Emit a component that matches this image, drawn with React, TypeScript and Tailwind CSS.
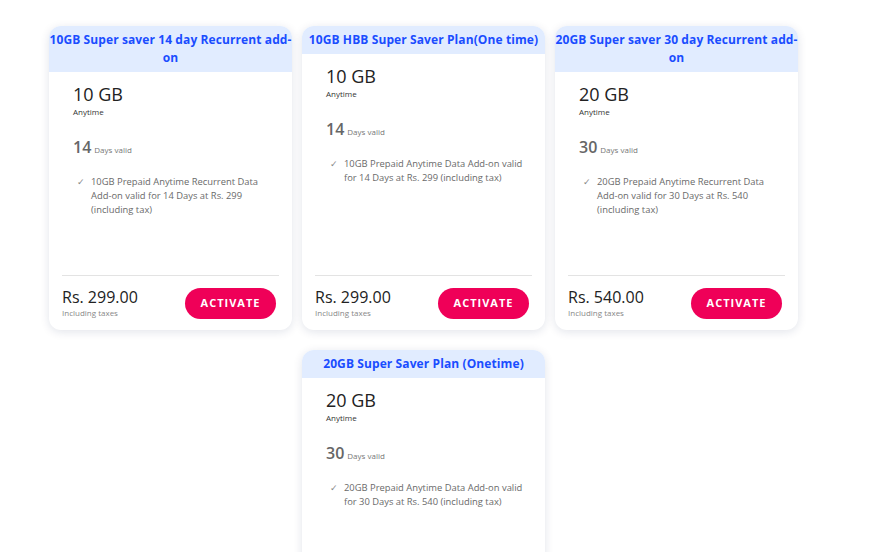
const plans = [
  {
    title: "10GB Super saver 14 day Recurrent add-on",
    data: "10 GB",
    days: "14",
    desc: "10GB Prepaid Anytime Recurrent Data Add-on valid for 14 Days at Rs. 299 (including tax)",
    price: "Rs. 299.00",
  },
  {
    title: "10GB HBB Super Saver Plan(One time)",
    data: "10 GB",
    days: "14",
    desc: "10GB Prepaid Anytime Data Add-on valid for 14 Days at Rs. 299 (including tax)",
    price: "Rs. 299.00",
  },
  {
    title: "20GB Super saver 30 day Recurrent add-on",
    data: "20 GB",
    days: "30",
    desc: "20GB Prepaid Anytime Recurrent Data Add-on valid for 30 Days at Rs. 540 (including tax)",
    price: "Rs. 540.00",
  },
  {
    title: "20GB Super Saver Plan (Onetime)",
    data: "20 GB",
    days: "30",
    desc: "20GB Prepaid Anytime Data Add-on valid for 30 Days at Rs. 540 (including tax)",
    price: "Rs. 540.00",
    offset: true,
  },
];

type Plan = (typeof plans)[number];

function PlanCard({ plan }: { plan: Plan }) {
  return (
    <div className="flex h-[304px] flex-col overflow-hidden rounded-[12px] bg-white shadow-[0_2px_10px_rgba(20,30,80,0.12)]">
      <div className="bg-[#e1ecff] py-[5px] text-center text-[12px] font-bold leading-[18px] tracking-[0.1px] text-[#1a4dff]">
        {plan.title}
      </div>
      <div className="flex-1 px-6 pt-3">
        <p className="text-[18px] leading-5 text-[#222]">{plan.data}</p>
        <p className="mt-[2px] text-[8px] leading-3 text-[#333]">Anytime</p>
        <p className="mt-[19px] flex items-baseline gap-[3px] leading-5">
          <span className="text-[16px] font-semibold text-[#666]">{plan.days}</span>
          <span className="text-[8px] text-[#777]">Days valid</span>
        </p>
        <div className="-mr-2 mt-[15px] flex gap-[6px] pl-[4px] text-[9.4px] leading-[14px] text-[#6a6a6a]">
          <span className="text-[#888]">✓</span>
          <span className="w-[180px]">{plan.desc}</span>
        </div>
      </div>
      <div className="mx-[13px] flex items-center justify-between border-t border-[#e3e3e3] pb-[11px] pt-[11px]">
        <div>
          <p className="text-[16px] leading-5 text-[#222]">{plan.price}</p>
          <p className="text-[8px] leading-3 text-[#888]">Including taxes</p>
        </div>
        <button className="mr-[3px] h-[31px] w-[91px] rounded-full bg-[#ef0058] text-[11px] font-bold tracking-[1px] text-white">
          ACTIVATE
        </button>
      </div>
    </div>
  );
}

export default function App() {
  return (
    <div
      className="h-[552px] w-[875px] overflow-hidden bg-white pl-[49px] pt-[26px]"
      style={{ fontFamily: '"Open Sans", "Noto Sans", sans-serif' }}
    >
      <div className="grid grid-cols-[243px_243px_243px] gap-x-[10px] gap-y-[20px]">
        {plans.map((plan) => (
          <div key={plan.title} className={plan.offset ? "col-start-2" : ""}>
            <PlanCard plan={plan} />
          </div>
        ))}
      </div>
    </div>
  );
}
